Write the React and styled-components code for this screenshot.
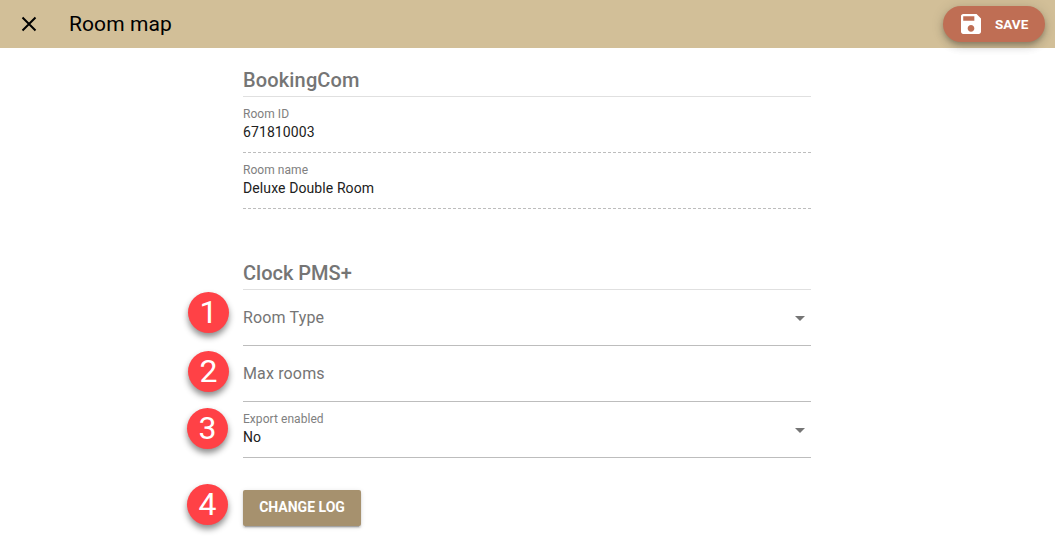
import React from "react";
import styled, { createGlobalStyle } from "styled-components";

const Global = createGlobalStyle`
  html, body { margin: 0; padding: 0; background: #fff; }
  body { font-family: Roboto, "Liberation Sans", sans-serif; }
`;

const Page = styled.div`
  width: 1055px;
  height: 549px;
  overflow: hidden;
  background: #fff;
`;

const Toolbar = styled.header`
  height: 48px;
  background: #d2bf98;
  display: flex;
  align-items: center;
  padding: 0 10px 0 20px;
`;

const CloseIcon = styled.svg`
  width: 18px;
  height: 18px;
  flex: none;
`;

const Title = styled.h1`
  margin: 0 0 1px 31px;
  font-size: 21px;
  font-weight: 400;
  color: #000;
  flex: 1;
  letter-spacing: 0.1px;
`;

const SaveButton = styled.button`
  height: 36px;
  width: 102px;
  border: 0;
  border-radius: 18px;
  background: #bf6e54;
  color: #fff;
  font: 700 13.5px Roboto, sans-serif;
  display: flex;
  align-items: center;
  padding: 0 0 0 18px;
  gap: 14px;
  box-shadow: 0 3px 5px -1px rgba(0,0,0,.2), 0 5px 8px 0 rgba(0,0,0,.14), 0 1px 14px 0 rgba(0,0,0,.12);
`;

const Form = styled.main`
  width: 568px;
  margin-left: 243px;
  padding-top: 20px;
`;

const Section = styled.section`
  margin-bottom: ${p => p.$gap || 0}px;
`;

const SectionTitle = styled.h2`
  margin: 0;
  height: 28px;
  line-height: 24px;
  font-size: 20px;
  font-weight: 500;
  color: #757575;
  border-bottom: 1px solid #e0e0e0;
  letter-spacing: ${p => p.$spacing || 0}px;
`;

const Row = styled.div`
  position: relative;
  height: 56px;
  box-sizing: border-box;
  border-bottom: 1px ${p => (p.$dashed ? "dashed" : "solid")} #bdbdbd;
  display: flex;
  flex-direction: column;
  justify-content: ${p => (p.$placeholder ? "center" : "flex-start")};
  padding-top: ${p => (p.$placeholder ? 0 : 10)}px;
`;

const Label = styled.div`
  font-size: 12px;
  line-height: 15px;
  color: #808080;
  height: 15px;
  letter-spacing: 0.05px;
`;

const Value = styled.div`
  font-size: 14px;
  line-height: 20px;
  color: #212121;
  letter-spacing: 0.1px;
`;

const Placeholder = styled.div`
  font-size: 16px;
  color: #757575;
  line-height: 20px;
  letter-spacing: 0.15px;
`;

const Caret = styled.span`
  position: absolute;
  right: 6px;
  top: 26px;
  width: 0;
  height: 0;
  border-left: 5px solid transparent;
  border-right: 5px solid transparent;
  border-top: 5px solid #757575;
`;

const Badge = styled.div`
  position: absolute;
  left: -${p => p.$left || 55}px;
  top: ${p => p.$top}px;
  width: 41px;
  height: 41px;
  border-radius: 50%;
  background: #ff4146;
  color: #fff;
  font-size: 32px;
  line-height: 41px;
  text-align: center;
  box-shadow: 0 4px 6px rgba(0,0,0,.45);
`;

const ButtonRow = styled.div`
  position: relative;
  margin-top: 32px;
`;

const LogButton = styled.button`
  height: 36px;
  width: 118px;
  border: 0;
  border-radius: 2px;
  background: #a6916e;
  color: #fff;
  font: 700 14px Roboto, sans-serif;
  padding: 0 0 2px;
  box-shadow: 0 3px 1px -2px rgba(0,0,0,.2), 0 2px 2px 0 rgba(0,0,0,.14), 0 1px 5px 0 rgba(0,0,0,.12);
`;

export default function App() {
  return (
    <Page>
      <Global />
      <Toolbar>
        <CloseIcon viewBox="0 0 18 18">
          <path d="M2.5 2.5 L15.5 15.5 M15.5 2.5 L2.5 15.5" stroke="#000" strokeWidth="2" fill="none" />
        </CloseIcon>
        <Title>Room map</Title>
        <SaveButton>
          <svg width="20" height="20" viewBox="3 3 18 18">
            <path fill="#fff" d="M17 3H5c-1.11 0-2 .9-2 2v14c0 1.1.89 2 2 2h14c1.1 0 2-.9 2-2V7l-4-4zm-5 16c-1.66 0-3-1.34-3-3s1.34-3 3-3 3 1.34 3 3-1.34 3-3 3zm3-10H5V5h10v4z" />
          </svg>
          SAVE
        </SaveButton>
      </Toolbar>
      <Form>
        <Section $gap={52}>
          <SectionTitle $spacing={0.15}>BookingCom</SectionTitle>
          <Row $dashed>
            <Label>Room ID</Label>
            <Value>671810003</Value>
          </Row>
          <Row $dashed>
            <Label>Room name</Label>
            <Value>Deluxe Double Room</Value>
          </Row>
        </Section>
        <Section>
          <SectionTitle>Clock PMS+</SectionTitle>
          <Row $placeholder>
            <Badge $top={2}>1</Badge>
            <Placeholder>Room Type</Placeholder>
            <Caret />
          </Row>
          <Row $placeholder>
            <Badge $top={5}>2</Badge>
            <Placeholder>Max rooms</Placeholder>
          </Row>
          <Row>
            <Badge $top={6} $left={56}>3</Badge>
            <Label>Export enabled</Label>
            <Value>No</Value>
            <Caret />
          </Row>
        </Section>
        <ButtonRow>
          <Badge $top={-6} $left={56}>4</Badge>
          <LogButton>CHANGE LOG</LogButton>
        </ButtonRow>
      </Form>
    </Page>
  );
}
